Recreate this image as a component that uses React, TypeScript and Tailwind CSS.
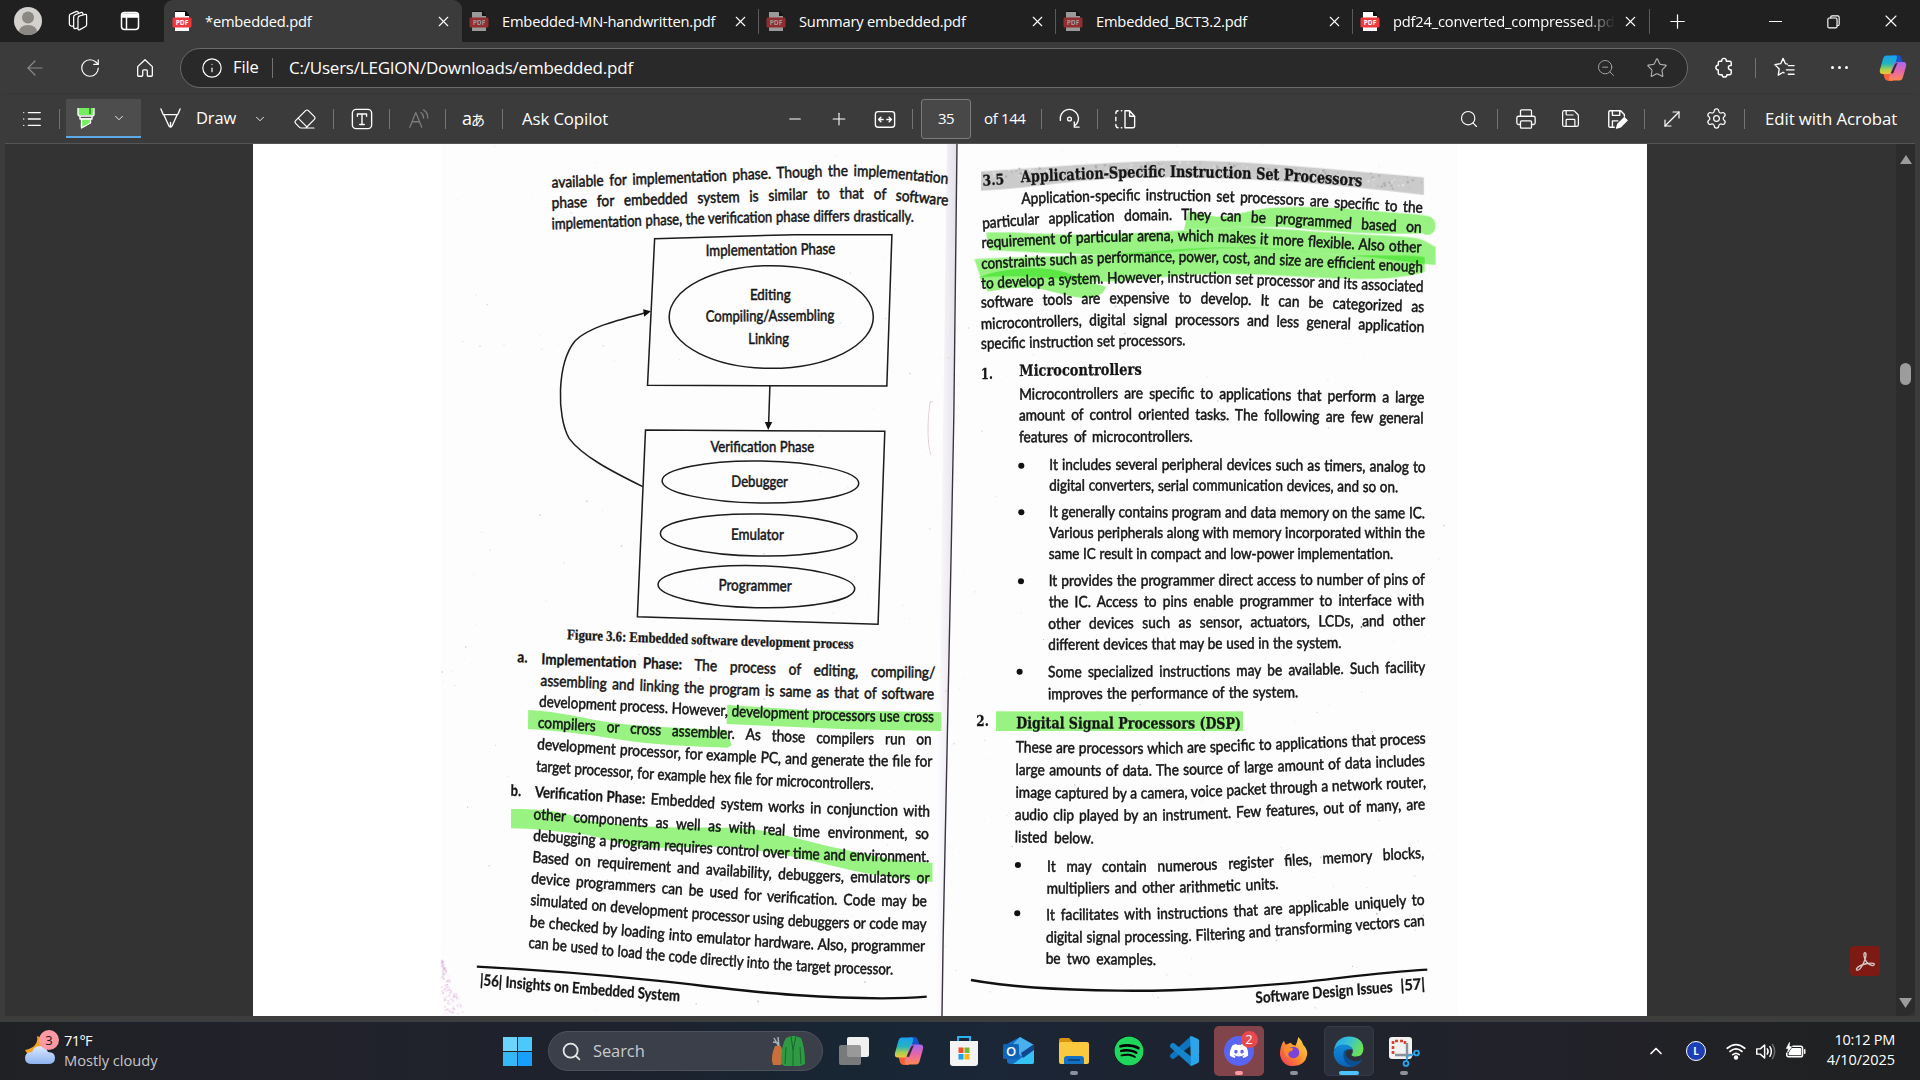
import React from "react";
import {
  ArrowLeft, ChevronDown, ChevronUp, Eraser, Info, List, Minus, MoveDiagonal, Plus, Printer,
  RotateCw, Save, Search, Settings, Star, X, ZoomOut,
} from "lucide-react";
import { FaDiscord, FaSpotify } from "react-icons/fa";

/* ---------------------------------------------------------------- text set on a curve */

type Pt = [number, number];
const SANS = "Lato, 'Open Sans', sans-serif";
const SERIF = "'DejaVu Serif', 'Liberation Serif', serif";
const TIMES = "'Liberation Serif', serif";

let ctx: CanvasRenderingContext2D | null = null;
function measure(text: string, font: string) {
  if (!ctx) ctx = document.createElement("canvas").getContext("2d");
  if (!ctx) return text.length * 24;
  ctx.font = font;
  return ctx.measureText(text).width;
}

function curve(p: Pt[], k: number) {
  const q = p.map(([x, y]) => [x / k, y] as Pt);
  let d = `M${q[0][0]},${q[0][1]}`;
  for (let i = 0; i < q.length - 1; i++) {
    const a = q[i - 1] || q[i], b = q[i], c = q[i + 1], e = q[i + 2] || q[i + 1];
    d += `C${b[0] + (c[0] - a[0]) / 6},${b[1] + (c[1] - a[1]) / 6} ${c[0] - (e[0] - b[0]) / 6},${c[1] - (e[1] - b[1]) / 6} ${c[0]},${c[1]}`;
  }
  const n = q.length;
  const dx = q[n - 1][0] - q[n - 2][0], dy = q[n - 1][1] - q[n - 2][1];
  return d + `L${q[n - 1][0] + dx * 0.3},${q[n - 1][1] + dy * 0.3}`;
}

type LineProps = { t: string; p: Pt[]; size?: number; weight?: number; family?: string; fit?: boolean };
function Line({ t, p, size = 47, weight = 400, family = SANS, fit = false }: LineProps) {
  const id = React.useId();
  const width = p.slice(1).reduce((s, b, i) => s + (b[0] - p[i][0]), 0) + 3;
  const natural = measure(t, `${weight} ${size}px ${family}`);
  const spaces = t.split(" ").length - 1;
  let k = 0.865;
  if (fit || spaces === 0) k = width / natural;
  else {
    // keep word gaps from closing up on dense lines
    const tight = width / (natural + spaces);
    if (k > tight) k = tight;
  }
  const ws = spaces ? (width / k - natural) / spaces : 0;
  return (
    <text
      transform={`scale(${k} 1)`}
      style={{ fontFamily: family, fontSize: size, fontWeight: weight, wordSpacing: ws }}
      fill="#151515" stroke="#151515" strokeWidth={weight > 500 ? 0.9 : 1.6}
    >
      <path id={id} d={curve(p, k)} fill="none" stroke="none" />
      <textPath href={`#${id}`}>{t}</textPath>
    </text>
  );
}

const Zone = ({ x, y, children }: { x: number; y: number; children: React.ReactNode }) => (
  <g transform={`translate(${x} ${y}) scale(0.338 0.33333)`}>{children}</g>
);

const topLeft: LineProps[] = [
  { t: "available for implementation phase. Though the implementation", p: [[331, 143], [700, 129], [1000, 115], [1250, 109], [1503, 132]] },
  { t: "phase for embedded system is similar to that of software", p: [[331, 205], [560, 196], [860, 187], [1240, 176], [1503, 197]] },
  { t: "implementation phase, the verification phase differs drastically.", p: [[331, 268], [700, 254], [1070, 245], [1400, 245]] },
  { t: "Implementation Phase", fit: true, p: [[786, 348], [1166, 342]] },
  { t: "Editing", fit: true, p: [[917, 480], [1034, 480]] },
  { t: "Compiling/Assembling", fit: true, p: [[786, 545], [1163, 542]] },
  { t: "Linking", fit: true, p: [[912, 611], [1029, 611]] },
  { t: "Verification Phase", fit: true, p: [[800, 935], [1104, 935]] },
  { t: "Debugger", fit: true, p: [[862, 1040], [1026, 1041]] },
  { t: "Emulator", fit: true, p: [[861, 1199], [1014, 1200]] },
  { t: "Programmer", fit: true, p: [[824, 1351], [1037, 1354]] },
];

const bottomLeft: LineProps[] = [
  { t: "Figure 3.6: Embedded software development process", fit: true, family: TIMES, weight: 700, size: 44, p: [[376, 88], [800, 104], [1220, 116]] },
  { t: "a.", p: [[229, 157], [256, 158]], weight: 700 },
  { t: "Implementation Phase:", p: [[300, 163], [713, 179]], weight: 700, size: 46 },
  { t: "The process of editing, compiling/", p: [[752, 181], [1100, 196], [1463, 204]] },
  { t: "assembling and linking the program is same as that of software", p: [[297, 227], [700, 247], [1100, 262], [1460, 268]] },
  { t: "development process. However, development processors use cross", p: [[293, 290], [600, 306], [840, 318], [1200, 332], [1458, 336]] },
  { t: "compilers or cross assembler. As those compilers run on", p: [[289, 353], [600, 373], [850, 386], [1150, 400], [1455, 404]] },
  { t: "development processor, for example PC, and generate the file for", p: [[287, 418], [700, 445], [1100, 464], [1455, 470]] },
  { t: "target processor, for example hex file for microcontrollers.", p: [[284, 484], [700, 512], [1100, 532], [1282, 539]] },
  { t: "b.", p: [[209, 557], [237, 558]], weight: 700 },
  { t: "Verification Phase:", p: [[280, 562], [604, 582]], weight: 700, size: 46 },
  { t: "Embedded system works in conjunction with", p: [[623, 583], [1000, 606], [1449, 620]] },
  { t: "other components as well as with real time environment, so", p: [[276, 628], [700, 657], [1100, 681], [1447, 687]] },
  { t: "debugging a program requires control over time and environment.", p: [[275, 692], [700, 724], [1100, 748], [1446, 756]] },
  { t: "Based on requirement and availability, debuggers, emulators or", p: [[273, 757], [700, 788], [1100, 812], [1446, 820]] },
  { t: "device programmers can be used for verification. Code may be", p: [[269, 820], [700, 853], [1100, 882], [1442, 889]] },
  { t: "simulated on development processor using debuggers or code may", p: [[267, 885], [700, 922], [1100, 951], [1440, 958]] },
  { t: "be checked by loading into emulator hardware. Also, programmer", p: [[265, 950], [700, 991], [1100, 1018], [1437, 1024]] },
  { t: "can be used to load the code directly into the target processor.", p: [[261, 1013], [700, 1056], [1100, 1085], [1341, 1094]] },
  { t: "|56| Insights on Embedded System", fit: true, weight: 700, p: [[118, 1126], [400, 1150], [707, 1174]] },
];

const section35: LineProps[] = [
  { t: "3.5", fit: true, family: SERIF, weight: 700, size: 44, p: [[97, 137], [158, 133]] },
  { t: "Application-Specific Instruction Set Processors", fit: true, family: SERIF, weight: 700, size: 48, p: [[210, 127], [430, 117], [650, 111], [950, 119], [1216, 139]] },
  { t: "Application-specific instruction set processors are specific to the", p: [[212, 192], [560, 181], [850, 187], [1100, 200], [1396, 219]] },
  { t: "particular application domain. They can be programmed based on", p: [[96, 266], [300, 251], [680, 240], [950, 250], [1200, 267], [1396, 278]] },
  { t: "requirement of particular arena, which makes it more flexible. Also other", p: [[94, 324], [400, 308], [700, 303], [950, 314], [1200, 328], [1396, 338]] },
  { t: "constraints such as performance, power, cost, and size are efficient enough", p: [[93, 387], [400, 371], [700, 366], [1000, 376], [1396, 397]] },
  { t: "to develop a system. However, instruction set processor and its associated", p: [[93, 446], [400, 432], [700, 428], [1000, 439], [1398, 456]] },
  { t: "software tools are expensive to develop. It can be categorized as", p: [[92, 503], [400, 492], [700, 490], [1000, 500], [1400, 517]] },
  { t: "microcontrollers, digital signal processors and less general application", p: [[92, 568], [400, 557], [700, 555], [1000, 561], [1400, 577]] },
  { t: "specific instruction set processors.", p: [[92, 627], [400, 620], [694, 616]] },
  { t: "1.", fit: true, family: SERIF, weight: 700, size: 42, p: [[92, 717], [124, 717]] },
  { t: "Microcontrollers", fit: true, family: SERIF, weight: 700, size: 47, p: [[205, 708], [564, 704]] },
  { t: "Microcontrollers are specific to applications that perform a large", p: [[205, 779], [700, 776], [1400, 789]] },
  { t: "amount of control oriented tasks. The following are few general", p: [[204, 842], [700, 839], [1400, 851]] },
  { t: "features of microcontrollers.", p: [[204, 907], [716, 905]] },
];

const micro: LineProps[] = [
  { t: "It includes several peripheral devices such as timers, analog to", p: [[294, 90], [850, 90], [1404, 97]] },
  { t: "digital converters, serial communication devices, and so on.", p: [[294, 152], [850, 152], [1322, 157]] },
  { t: "It generally contains program and data memory on the same IC.", p: [[294, 231], [1403, 235]] },
  { t: "Various peripherals along with memory incorporated within the", p: [[294, 295], [1404, 295]] },
  { t: "same IC result in compact and low-power implementation.", p: [[292, 358], [1309, 358]] },
  { t: "It provides the programmer direct access to number of pins of", p: [[292, 438], [1404, 434]] },
  { t: "the IC. Access to pins enable programmer to interface with", p: [[292, 502], [1403, 496]] },
  { t: "other devices such as sensor, actuators, LCDs, and other", p: [[291, 567], [1404, 557]] },
  { t: "different devices that may be used in the system.", p: [[291, 630], [1156, 624]] },
  { t: "Some specialized instructions may be available. Such facility", p: [[290, 712], [850, 708], [1404, 697]] },
  { t: "improves the performance of the system.", p: [[290, 778], [1028, 772]] },
  { t: "2.", fit: true, family: SERIF, weight: 700, size: 42, p: [[78, 858], [112, 858]] },
  { t: "Digital Signal Processors (DSP)", fit: true, family: SERIF, weight: 700, size: 47, p: [[196, 865], [858, 866]] },
];

const dsp: LineProps[] = [
  { t: "These are processors which are specific to applications that process", p: [[195, 157], [600, 161], [950, 149], [1406, 131]] },
  { t: "large amounts of data. The source of large amount of data includes", p: [[194, 225], [600, 227], [950, 215], [1406, 197]] },
  { t: "image captured by a camera, voice packet through a network router,", p: [[194, 293], [600, 295], [950, 281], [1407, 262]] },
  { t: "audio clip played by an instrument. Few features, out of many, are", p: [[192, 360], [600, 362], [950, 348], [1406, 328]] },
  { t: "listed below.", p: [[192, 427], [422, 431]] },
  { t: "It may contain numerous register files, memory blocks,", p: [[287, 515], [650, 514], [950, 500], [1404, 474]] },
  { t: "multipliers and other arithmetic units.", p: [[286, 581], [700, 577], [970, 567]] },
  { t: "It facilitates with instructions that are applicable uniquely to", p: [[285, 661], [700, 655], [1050, 638], [1404, 614]] },
  { t: "digital signal processing. Filtering and transforming vectors can", p: [[284, 728], [700, 723], [1050, 702], [1404, 677]] },
  { t: "be two examples.", p: [[283, 791], [606, 795]] },
  { t: "Software Design Issues", fit: true, weight: 700, p: [[905, 910], [1308, 876]] },
  { t: "|57|", fit: true, weight: 700, p: [[1334, 873], [1403, 868]] },
];

const random = (() => {
  let s = 7;
  return () => ((s = (s * 16807) % 2147483647) / 2147483647);
})();
const speckles = Array.from({ length: 420 }, () => ({ x: 442 + random() * 1014, y: 145 + random() * 869, r: 0.3 + random() * 0.6, o: 0.06 + random() * random() * 0.4, c: "#555" }));
const purple = Array.from({ length: 110 }, () => {
  const v = random();
  return { x: 442 + random() * 24 * v, y: 960 + v * 54, r: 0.5 + random() * 0.9, o: 0.35, c: "#dcaedb" };
});
const grain = Array.from({ length: 220 }, () => ({ x: 96 + random() * 1300, v: random(), r: 1.5 + random() * 2.5, light: random() > 0.5 }));

const G = "#98f383";

function ScannedSpread() {
  return (
    <svg className="block" width="1394" height="872" viewBox="253 144 1394 872">
      <defs>
        <linearGradient id="gutter" x1="0" x2="1">
          <stop offset="0" stopColor="#e9e6f0" stopOpacity="0" />
          <stop offset="1" stopColor="#e2dfe9" />
        </linearGradient>
      </defs>
      <rect x="441" y="144" width="1017" height="872" fill="#fefdfe" />
      <path d="M947 144H957L943 1016H935Z" fill="url(#gutter)" />
      {[...speckles, ...purple].map((d, i) => <circle key={i} cx={d.x} cy={d.y} r={d.r} opacity={d.o} fill={d.c} />)}
      <path d="M957 144C956 300 954 420 951 560S944 860 942 1016" fill="none" stroke="#3b3340" strokeWidth="1.4" />

      <g style={{ isolation: "isolate" }}>
        <Zone x={440} y={610}>
          <g fill={G} style={{ mixBlendMode: "multiply" }}>
            <path d="M850 285L1080 300L1483 307V363L1200 358L848 342Z" />
            <path d="M261 300C350 302 440 330 520 340S760 357 848 360L863 406L850 413C700 408 620 402 540 390S400 366 260 357Z" />
            <path d="M210 597C280 597 350 602 400 620S500 640 600 648S800 650 900 655C1000 665 1100 700 1200 720S1350 755 1457 758V816C1350 808 1250 790 1180 772S1000 728 900 716S700 716 620 713S480 678 400 670S280 656 210 655Z" />
          </g>
        </Zone>
        <Zone x={950} y={140}>
          <path d="M92 94C300 82 500 62 700 62S1200 95 1402 112V165C1200 140 1000 118 700 112S300 140 92 152Z" fill="#cbcbcb" />
          {grain.map((g, i) => {
            const u = (g.x - 700) / 700;
            const top = 66 + (u < 0 ? 30 : 48) * Math.min(1, Math.abs(u) ** 1.3);
            return <circle key={i} cx={g.x} cy={top + g.v * 42} r={g.r} fill={g.light ? "#e6e6e6" : "#aaaaaa"} />;
          })}
          <g fill={G} style={{ mixBlendMode: "multiply" }}>
            <path d="M704 214L790 230C850 228 880 208 960 203S1150 203 1200 208S1380 222 1405 226C1430 228 1438 245 1436 262C1432 285 1410 290 1400 280C1280 284 1150 276 1060 268S980 262 840 262L692 270Z" />
          </g>
          <g fill={G} style={{ mixBlendMode: "multiply" }}>
            <path d="M107 278C200 274 300 286 420 284S660 272 850 262C950 262 1080 276 1200 282S1380 290 1400 300S1430 318 1437 320V375C1350 368 1280 352 1180 346S1000 326 880 324S700 336 560 342S260 336 115 330Z" />
          </g>
          <g fill={G} style={{ mixBlendMode: "multiply" }}>
            <path d="M72 357C200 350 320 350 450 344S700 322 860 322S1080 345 1200 346S1380 345 1405 352V395C1360 414 1260 420 1160 416S960 404 840 402S640 412 540 420S440 426 400 424S240 402 90 412Z" />
          </g>
          <g fill={G} style={{ mixBlendMode: "multiply" }}>
            <path d="M86 411C150 386 240 380 300 388S420 434 462 440Q450 474 400 475C330 468 290 446 240 444S160 446 112 455Z" />
          </g>
        </Zone>
        <Zone x={950} y={440}><rect x="136" y="814" width="731" height="59" fill={G} /></Zone>
      </g>

      <Zone x={440} y={140}>
        <g fill="none" stroke="#1c1c1c" strokeWidth="4.5">
          <path d="M635 296L1050 284L1337 284L1322 738L614 736Z" />
          <ellipse cx="980" cy="531" rx="302" ry="154" />
          <path d="M608 870L1316 874L1296 1453L584 1430Z" />
          <ellipse cx="948" cy="1026" rx="291" ry="63" transform="rotate(0.8 948 1026)" />
          <ellipse cx="943" cy="1185" rx="291" ry="63" transform="rotate(1 943 1185)" />
          <ellipse cx="936" cy="1340" rx="291" ry="63" transform="rotate(1.3 936 1340)" />
          <path d="M976 738L972 860" />
          <path d="M600 1040C510 995 420 948 382 895C345 830 345 670 400 602C440 562 520 542 605 519" />
        </g>
        <path d="M961 846H983L971 870ZM601 508L624 514L604 530Z" fill="#111" />
        <path d="M1458 785H1450Q1440 860 1446 915L1452 945" fill="none" stroke="#e3d3d7" strokeWidth="3" />
        {topLeft.map((l) => <Line key={l.t} {...l} />)}
      </Zone>
      <Zone x={440} y={610}>
        {bottomLeft.map((l) => <Line key={l.t} {...l} />)}
        <path d="M109 1070C300 1080 480 1095 640 1112S900 1145 1050 1155S1350 1168 1440 1160" fill="none" stroke="#111" strokeWidth="7" />
      </Zone>
      <Zone x={950} y={140}>{section35.map((l) => <Line key={l.t} {...l} />)}</Zone>
      <Zone x={950} y={440}>
        {[[211, 77], [211, 217], [210, 424], [206, 695]].map(([x, y]) => <circle key={y} cx={x} cy={y} r="9" fill="#111" />)}
        {micro.map((l) => <Line key={l.t} {...l} />)}
        <circle cx="1217" cy="561" r="2.500" fill="#333" />
      </Zone>
      <Zone x={950} y={700}>
        {[[201, 495], [199, 640]].map(([x, y]) => <circle key={y} cx={x} cy={y} r="9" fill="#111" />)}
        {dsp.map((l) => <Line key={l.t} {...l} />)}
        <path d="M62 840C180 862 340 870 500 872S860 862 1000 850S1250 818 1412 809" fill="none" stroke="#111" strokeWidth="7" />
      </Zone>
    </svg>
  );
}

/* ---------------------------------------------------------------- icons */

function Svg({ s = 22, children, w = 1.3, vb = "0 0 24 24" }: { s?: number; children: React.ReactNode; w?: number; vb?: string }) {
  return <svg className="block shrink-0" width={s} height={s} viewBox={vb} fill="none" stroke="currentColor" strokeWidth={w} strokeLinecap="round" strokeLinejoin="round">{children}</svg>;
}

function PdfIcon({ dim }: { dim?: boolean }) {
  return (
    <svg className={dim ? "block shrink-0 opacity-55" : "block shrink-0"} width="20" height="20" viewBox="0 0 20 20">
      <path d="M3 0H13L17 5V8H3Z" fill="#fff" />
      <path d="M3 0H14L17 4V5H13V1H3Z" fill="#0a0a0a" />
      <rect x="3" y="14" width="14" height="6" fill="#fff" />
      <rect x="0.5" y="6.5" width="19" height="10" rx="1.2" fill="#f0393e" />
      <text x="10" y="14" textAnchor="middle" fontSize="6.6" fontWeight="700" fontFamily="Open Sans" fill="#fff">PDF</text>
    </svg>
  );
}

function Copilot({ s }: { s: number }) {
  return (
    <svg className="block shrink-0" width={s} height={s} viewBox="0 0 30 30">
      <defs>
        <linearGradient id="cpA" x1="0" y1="0" x2="0" y2="1">
          <stop offset="0" stopColor="#1a9ff0" /><stop offset=".45" stopColor="#22b4c0" /><stop offset=".75" stopColor="#a5cf50" /><stop offset="1" stopColor="#f3c43a" />
        </linearGradient>
        <linearGradient id="cpB" x1="0" y1="0" x2="0" y2="1">
          <stop offset="0" stopColor="#a468f0" /><stop offset=".5" stopColor="#e866a8" /><stop offset="1" stopColor="#ff8a50" />
        </linearGradient>
      </defs>
      <path d="M15 1H20Q23 1 24 4L25.500 9H21Q18 9 17 12Z" fill="#1b50c8" />
      <path d="M15 29H10Q7 29 6 26L4.500 21H9Q12 21 13 18Z" fill="#f4613a" />
      <path d="M8 1.500H17.500Q20 1.500 19 5L14.500 19Q13.700 21.500 11 21.500H4Q0 21.500 1 17L4.500 4.500Q5.400 1.500 8 1.500Z" fill="url(#cpA)" />
      <path d="M22 28.500H12.500Q10 28.500 11 25L15.500 11Q16.300 8.500 19 8.500H26Q30 8.500 29 13L25.500 25.500Q24.600 28.500 22 28.500Z" fill="url(#cpB)" />
      <path d="M17.200 10.500L20 9L15 21L12.600 20.500Z" fill="#2b2b38" />
    </svg>
  );
}

const Sep = ({ className = "" }: { className?: string }) => <div className={"h-5 w-px shrink-0 bg-[#737373] " + className} />;

/* ---------------------------------------------------------------- browser chrome */

function Tab({ title, dim, active, clip }: { title: string; dim?: boolean; active?: boolean; clip?: boolean }) {
  return (
    <div className={active
      ? "flex h-[43px] w-[298px] shrink-0 items-center rounded-t-[9px] bg-[#3b3b3b] pb-px pl-[8px]"
      : "flex h-[42px] w-[297px] shrink-0 items-center pl-[7px]"}>
      <PdfIcon dim={dim} />
      <div className={clip
        ? "ml-[13px] w-[222px] overflow-hidden whitespace-nowrap text-[14.7px] tracking-[-0.2px] [mask-image:linear-gradient(to_right,black_86%,transparent)]"
        : "ml-[13px] w-[222px] overflow-hidden whitespace-nowrap text-[14.7px] tracking-[-0.2px]"}>{title}</div>
      <X size={17} strokeWidth={1.6} className={clip ? "ml-[7px]" : "ml-[8px]"} />
      {!active && <div className="ml-auto h-[25px] w-px bg-[#5a5a5a]" />}
    </div>
  );
}

function TabStrip() {
  return (
    <div className="flex h-[42px] items-start bg-[#202020]">
      <div className="flex h-[42px] w-[164px] shrink-0 items-center">
        <svg className="ml-[14px] block" width="28" height="28" viewBox="0 0 28 28">
          <circle cx="14" cy="14" r="14" fill="#d3d1ce" />
          <circle cx="14" cy="10.500" r="6" fill="#8b8884" />
          <path d="M5 24.500Q6 18 14 18T23 24.500Q19 28 14 28T5 24.500Z" fill="#8b8884" />
        </svg>
        <div className="ml-[24px]">
          <Svg s={23}>
            <path d="M13 6.500L20 4.500Q21.500 4.200 21.500 6V15.500Q21.500 17 20 17.500L14.500 20.500Q12.500 21.500 12.500 19.500V8.500Q12.500 7 14 6.500" />
            <path d="M12 19L9.500 19.500Q8 19.500 8 18V7Q8 5.500 9.500 5L16 2.500Q17.500 2.200 17.700 4.500M7.500 17L5 16.500Q3.500 16 3.500 14.500V6Q3.500 4.500 5 4L11 1.500Q12.500 1.200 13 3" />
          </Svg>
        </div>
        <svg className="ml-[31px] block" width="20" height="20" viewBox="0 0 20 20" fill="none" stroke="#fff" strokeWidth="1.500">
          <rect x="1.500" y="1.500" width="17" height="17" rx="3" /><path d="M6.500 6V18" /><path d="M2 3H18V6H2Z" fill="#fff" />
        </svg>
      </div>
      <Tab title="*embedded.pdf" active />
      <Tab title="Embedded-MN-handwritten.pdf" dim />
      <Tab title="Summary embedded.pdf" dim />
      <Tab title="Embedded_BCT3.2.pdf" dim />
      <Tab title="pdf24_converted_compressed.pdf" clip />
      <div className="flex h-[42px] flex-1 items-center">
        <Plus size={23} strokeWidth={1.300} className="ml-[16px]" />
        <div className="ml-[80px] h-px w-[13px] bg-white" />
        <div className="ml-[43px]">
          <Svg s={17} w={1.600}><rect x="4" y="7" width="13" height="14" rx="2" /><path d="M8 7V6Q8 4 10 4H18Q20 4 20 6V16Q20 18 18 18H17" /></Svg>
        </div>
        <X size={20} strokeWidth={1.300} className="ml-[39px]" />
      </div>
    </div>
  );
}

function AddressRow() {
  return (
    <div className="flex h-[51px] items-center">
      <ArrowLeft size={24} strokeWidth={1.200} className="ml-[23px] text-[#8a8a8a]" />
      <RotateCw size={22} strokeWidth={1.300} className="ml-[32px]" />
      <div className="ml-[33px]">
        <Svg s={22} w={1.400}><path d="M4 10.500L12 3L20 10.500V20Q20 21 19 21H15.500Q14.500 21 14.500 20V15Q14.500 14 13.500 14H10.500Q9.500 14 9.500 15V20Q9.500 21 8.500 21H5Q4 21 4 20Z" /></Svg>
      </div>
      <div className="ml-[24px] flex h-10 w-[1508px] shrink-0 items-center rounded-full border border-[#6a6a6a] bg-[#292929]">
        <Info size={22} strokeWidth={1.300} className="ml-[20px]" />
        <div className="ml-[10px] w-[30px] text-[16.500px] tracking-[-0.1px]">File</div>
        <Sep className="ml-[9px]" />
        <div className="ml-[16px] w-[1300px] whitespace-nowrap text-[17px] tracking-[-0.220px]">C:/Users/LEGION/Downloads/embedded.pdf</div>
        <ZoomOut size={20} strokeWidth={1.200} className="ml-[7px] text-[#a0a0a0]" />
        <Star size={22} strokeWidth={1.200} className="ml-[30px] text-[#b5b5b5]" />
      </div>
      <div className="ml-[25px]">
        <Svg s={23} w={1.500}><path d="M9 5.500Q9 2.500 11.500 2.500T14 5.500H17.500Q19 5.500 19 7V10Q16 9.500 16 12T19 14.500V18Q19 19.500 17.500 19.500H14.500Q14.500 22 12 22T9.500 19.500H7Q5.500 19.500 5.500 18V14.500Q3 14.500 3 12T5.500 9.500V7Q5.500 5.500 7 5.500Z" /></Svg>
      </div>
      <Sep className="ml-[19px]" />
      <div className="ml-[17px]">
        <Svg s={23} w={1.400}><path d="M15 8.500L13 8L10.500 2.500L8 8L2 9L6.500 13.500L5.500 20L10.500 17L11.500 17.600M16 10H22M14 14.500H22M16 19H22" /></Svg>
      </div>
      <div className="ml-[35px] flex gap-[4px]">
        <i className="size-[3px] rounded-full bg-white" /><i className="size-[3px] rounded-full bg-white" /><i className="size-[3px] rounded-full bg-white" />
      </div>
      <div className="ml-[31px]"><Copilot s={28} /></div>
    </div>
  );
}

function PdfToolbar() {
  return (
    <div className="flex h-[50px] shrink-0 items-center rounded-t-[9px] border-t border-[#363636] pl-[21px]">
      <List size={22} strokeWidth={1.400} />
      <Sep className="ml-[16px]" />
      <div className="ml-[6px] flex h-[39px] w-[75px] shrink-0 items-center border-b-2 border-[#5eaae8] bg-[#4d4d4d]">
        <svg className="ml-[9px] block" width="22" height="22" viewBox="0 0 22 22" fill="none" stroke="#fff" strokeWidth="1.400" strokeLinejoin="round">
          <path d="M3 1H19V8H3Z" fill="#72ef5d" stroke="none" /><path d="M15 1V7" stroke="#2c6b22" />
          <path d="M3 1V7Q3 9 5 9H17Q19 9 19 7V1M5 9V12H17V9" /><path d="M6.500 12V21L15.500 16V12Z" fill="#72ef5d" />
        </svg>
        <ChevronDown size={14} strokeWidth={1.500} className="ml-[15px]" />
      </div>
      <div className="ml-[18px]"><Svg s={23} w={1.400}><path d="M2 2L4.500 8H19.500L22 2M5 8L10.500 20Q12 22 13.500 20L19 8M12 16V21" /></Svg></div>
      <div className="ml-[14px] w-[40px] text-[16.500px] tracking-[-0.1px]">Draw</div>
      <ChevronDown size={14} strokeWidth={1.500} className="ml-[17px]" />
      <Eraser size={24} strokeWidth={1.200} className="ml-[26px]" />
      <Sep className="ml-[16px]" />
      <div className="ml-[17px]">
        <Svg s={22} w={1.500}><rect x="1.500" y="1.500" width="21" height="21" rx="4" /><path d="M7 9V6.500H17V9M12 6.500V18M9.500 18H14.500" /></Svg>
      </div>
      <Sep className="ml-[16px]" />
      <div className="ml-[18px] text-[#7c7c7c]">
        <Svg s={22} w={1.400}><path d="M2 21L8.500 5L15 21M4.500 15H12.500M14 5Q17 7 17 11M17 2Q22 5 21.500 11" /></Svg>
      </div>
      <Sep className="ml-[15px]" />
      <div className="ml-[16px] flex w-[26px] items-baseline text-[18px] tracking-[-1px]">a<span className="font-['Noto_Sans_CJK_JP'] text-[14px]">あ</span></div>
      <Sep className="ml-[14px]" />
      <div className="ml-[19px] w-[100px] whitespace-nowrap text-[16.800px] tracking-[-0.1px]">Ask Copilot</div>
      <Minus size={18} strokeWidth={1.600} className="ml-[164px]" />
      <Plus size={20} strokeWidth={1.300} className="ml-[25px]" />
      <div className="ml-[25px]">
        <Svg s={22} w={1.500}><rect x="1.500" y="4" width="21" height="17" rx="3" /><path d="M5 12.500H10M14 12.500H19M7.500 10L5 12.500L7.500 15M16.500 10L19 12.500L16.500 15" /></Svg>
      </div>
      <Sep className="ml-[16px]" />
      <div className="ml-[8px] flex h-[40px] w-[50px] shrink-0 items-center justify-center rounded-[3px] border border-[#7b7b7b] bg-[#484848] text-[15px] tracking-[-0.500px]">35</div>
      <div className="ml-[13px] w-[44px] whitespace-nowrap text-[15px] tracking-[-0.350px]">of 144</div>
      <Sep className="ml-[13px]" />
      <div className="ml-[16px]">
        <Svg s={23} w={1.400}><path d="M2.500 14A9.500 9.500 0 1 1 17 20M17 15.500V21H22" /><circle cx="12" cy="12.500" r="2" /></Svg>
      </div>
      <Sep className="ml-[16px]" />
      <div className="ml-[16px]">
        <Svg s={22} w={1.500}><path d="M12 3H17L22.500 9V20Q22.500 21.500 21 21.500H12ZM17 3V9H22.500M8.500 3H8M4.500 3Q2 3 2 6M2 10V14M2 18Q2 21.500 4.500 21.500M8.500 21.500H8" /></Svg>
      </div>
      <Search size={20} strokeWidth={1.400} className="ml-[323px]" />
      <Sep className="ml-[18px]" />
      <Printer size={22} strokeWidth={1.400} className="ml-[17px]" />
      <Save size={21} strokeWidth={1.400} className="ml-[23px]" />
      <div className="ml-[25px]">
        <Svg s={22} w={1.500}><path d="M9 21H4.500Q3 21 3 19.500V4.500Q3 3 4.500 3H16L20 7V9M7 3V8H15V3M7 21V14H13" /><path d="M11.500 22L13 17.500L20 10.500L23 13.500L16 20.500Z" fill="currentColor" /></Svg>
      </div>
      <Sep className="ml-[16px]" />
      <MoveDiagonal size={24} strokeWidth={1.200} className="ml-[15px]" />
      <Settings size={23} strokeWidth={1.300} className="ml-[21px]" />
      <Sep className="ml-[16px]" />
      <div className="ml-[20px] whitespace-nowrap text-[16.800px] tracking-[-0.060px]">Edit with Acrobat</div>
    </div>
  );
}

function Viewer() {
  return (
    <div className="mx-[5px] flex h-[873px] border-t border-[#555] bg-[#333]">
      <div className="w-[248px] shrink-0" />
      <div className="w-[1394px] shrink-0 bg-white"><ScannedSpread /></div>
      <div className="flex w-[249px] shrink-0 items-end justify-end pr-[16px] pb-[40px]">
        <div className="flex size-[30px] items-center justify-center rounded-[4px] bg-[#7e1a14] text-[#d8c9c8]">
          <Svg s={22} w={1.500}><path d="M11.500 3Q10 4.500 12 10Q14 15 20 17Q22.500 17 22 15Q20 13.500 13 15Q5 17 3 20Q2 22 4 22Q6.500 22 10 15Q13.500 8 13 4Q12.500 2.500 11.500 3Z" /></Svg>
        </div>
      </div>
      <div className="flex flex-1 flex-col items-center rounded-br-[9px] bg-[#2c2c2c]">
        <svg className="mt-[11px] block" width="12" height="10"><path d="M6 0L12 9H0Z" fill="#9c9c9c" /></svg>
        <div className="mt-[198px] h-[22px] w-[11px] rounded-full bg-[#9c9c9c]" />
        <svg className="mt-auto mb-[8px] block" width="13" height="10"><path d="M0 0H13L6.500 10Z" fill="#9c9c9c" /></svg>
      </div>
    </div>
  );
}

/* ---------------------------------------------------------------- taskbar */

function Slot({ children, mark, tile }: { children: React.ReactNode; mark?: "dot" | "red" | "blue"; tile?: "red" | "grey" }) {
  return (
    <div className="flex h-full w-[55px] shrink-0 items-center justify-center">
      <div className={
        tile === "red" ? "relative flex h-[50px] w-[50px] items-center justify-center rounded-[5px] bg-[#82444b]"
          : tile === "grey" ? "relative flex h-[50px] w-[50px] items-center justify-center rounded-[5px] border border-[#363c47] bg-[#2b303b]"
            : "relative flex h-[50px] w-[50px] items-center justify-center"}>
        {children}
        {mark === "dot" && <i className="absolute bottom-[1px] h-[4px] w-[8px] rounded-full bg-[#8d919b]" />}
        {mark === "red" && <i className="absolute bottom-[1px] h-[4px] w-[8px] rounded-full bg-[#ff99a4]" />}
        {mark === "blue" && <i className="absolute bottom-0 h-[4px] w-[20px] rounded-full bg-[#4cc2ff]" />}
      </div>
    </div>
  );
}

function Taskbar() {
  return (
    <div className="flex h-[59px] items-center border-t border-[#3a3d42] bg-[linear-gradient(90deg,#1f2124_0%,#22222b_15%,#1e222d_30%,#182634_45%,#1b2636_52%,#1e222e_65%,#22222a_80%,#202122_95%)]">
      <div className="flex w-[503px] shrink-0 items-center pl-[24px]">
        <svg className="block" width="36" height="42" viewBox="0 0 36 42">
          <defs>
            <linearGradient id="cloud" x1="0" y1="0" x2="0" y2="1"><stop offset="0" stopColor="#dce9ff" /><stop offset="1" stopColor="#8fb3f0" /></linearGradient>
          </defs>
          <path d="M13 6Q15 17 1 20Q5 28 14 25Q22 20 18 8Z" fill="#f2a324" />
          <path d="M8 34Q1 34 1 28T8 22Q10 16 16 16T24 22Q31 22 31 28T24 34Z" fill="url(#cloud)" />
          <circle cx="25" cy="10" r="10" fill="#ff99a4" />
          <text x="25" y="15" textAnchor="middle" fontSize="13" fontFamily="Open Sans" fill="#1a1a1a">3</text>
        </svg>
        <div className="mb-[3px] ml-[4px] text-[14.700px] leading-[20px] tracking-[-0.050px]"><div className="tracking-[-0.700px]">71°F</div><div className="text-[#c5c6c9]">Mostly cloudy</div></div>
      </div>
      <div className="grid size-[29px] shrink-0 grid-cols-2 gap-px">
        <i className="bg-[#6cd3fb]" /><i className="bg-[#4cc9fa]" /><i className="bg-[#35b8f8]" /><i className="bg-[#179ffb]" />
      </div>
      <div className="ml-[16px] flex h-[40px] w-[275px] shrink-0 items-center rounded-full border border-[#4d525c] bg-[#3a3f49]">
        <Search size={21} strokeWidth={2} className="ml-[12px] text-[#e6e6e6]" />
        <div className="ml-[11px] text-[16.500px] tracking-[-0.100px] text-[#c8cad0]">Search</div>
        <svg className="ml-auto mr-[16px] block" width="36" height="32" viewBox="0 0 36 32">
          <path d="M4 3L9 12M8 2L9 12M3 7L9 8" stroke="#aab0bb" strokeWidth="1.500" fill="none" />
          <path d="M5 11H11Q14 20 11 30H3Q0 22 5 11Z" fill="#c8703c" />
          <path d="M16 3L21 1H26L31 3Q35 12 35 29L30 31H15L11 29Q11 10 16 3Z" fill="#2f9a44" />
          <path d="M21 1L23 15L26 1M23 15V31M16 12L15 29M30 12L31 29" stroke="#17662a" strokeWidth="1" fill="none" />
        </svg>
      </div>
      <div className="ml-[3px] flex h-full">
        <Slot>
          <svg width="30" height="28" viewBox="0 0 30 28"><rect x="8" y="0" width="22" height="20" rx="2" fill="#f0f0f0" /><rect x="0" y="8" width="22" height="20" rx="2" fill="#8a8a8a" opacity=".85" /></svg>
        </Slot>
        <Slot><Copilot s={30} /></Slot>
        <Slot>
          <svg width="28" height="30" viewBox="0 0 28 30"><path d="M8 6V1H20V6" fill="none" stroke="#2cb3ee" strokeWidth="2" /><path d="M0 5H28V27Q28 30 25 30H3Q0 30 0 27Z" fill="#f4f4f4" /><path d="M8.500 11.500H13.500V17H8.500Z" fill="#f0502a" /><path d="M14.500 11.500H19.500V17H14.500Z" fill="#7cb82f" /><path d="M8.500 18H13.500V23.500H8.500Z" fill="#1ba1e8" /><path d="M14.500 18H19.500V23.500H14.500Z" fill="#fcb813" /></svg>
        </Slot>
        <Slot>
          <svg width="32" height="30" viewBox="0 0 32 30"><path d="M4 8L17 1L31 9V26Q31 28 29 28H8Q4 28 4 25Z" fill="#1a6fc4" /><path d="M17 1L31 9L18 20L8 10Z" fill="#48b0ee" /><path d="M31 9V26Q31 28 29 28H10L31 13Z" fill="#35c3f4" /><path d="M18 17L31 8V14L20 22Z" fill="#12458c" /><rect x="0" y="8" width="16" height="15" rx="1.500" fill="#0f64b8" /><text x="8" y="20" textAnchor="middle" fontSize="13" fontWeight="600" fontFamily="Open Sans" fill="#fff">O</text></svg>
        </Slot>
        <Slot mark="dot">
          <svg width="30" height="28" viewBox="0 0 30 28"><path d="M0 3Q0 1 2 1H10L14 5H28V12H0Z" fill="#d8930c" /><rect x="0" y="5" width="30" height="22" rx="2" fill="#fbc93d" /><path d="M5 27V22Q5 19 8 19H22Q25 19 25 22V27Z" fill="#1271c4" /><path d="M9 23H21" stroke="#0a3f7a" strokeWidth="1.500" /></svg>
        </Slot>
        <Slot><div className="rounded-full bg-black"><FaSpotify size={30} color="#1fd65f" /></div></Slot>
        <Slot>
          <svg width="30" height="30" viewBox="0 0 30 30"><path d="M22 0L1.500 18.500Q0 20 1.500 21.500L3 22.800Q4 23.500 5 22.800L22 9.500Z" fill="#0f74c0" /><path d="M22 30L1.500 11.500Q0 10 1.500 8.500L3 7.200Q4 6.500 5 7.200L22 20.500Z" fill="#1484cc" /><path d="M21 0.500Q22 0 23 0.300L29 3Q30 3.500 30 5V25Q30 26.500 29 27L23 29.700Q22 30 21 29.500L22 28Z" fill="#2ba4ea" /></svg>
        </Slot>
        <Slot tile="red" mark="red">
          <div className="flex size-[30px] items-center justify-center rounded-full bg-[#5865f2]"><FaDiscord size={20} color="#fff" /></div>
          <div className="absolute top-[5px] right-[6px] flex size-[17px] items-center justify-center rounded-full bg-[#e9484d] text-[13px] leading-none">2</div>
        </Slot>
        <Slot mark="dot">
          <svg width="29" height="29" viewBox="0 0 30 30">
            <defs><linearGradient id="fx" x1="1" y1="0" x2="0" y2="1"><stop offset="0" stopColor="#ffe14d" /><stop offset=".45" stopColor="#ff9a2c" /><stop offset="1" stopColor="#f0305c" /></linearGradient></defs>
            <path d="M20 0Q24 4 25 8Q30 13 29 19Q27 30 15 30T1 18Q1 10 5 4L7 8L12 6Q13 8 17 9Q19 5 20 0Z" fill="url(#fx)" /><circle cx="15" cy="16" r="6" fill="#7a44d8" /><path d="M5 12Q10 10 15 12Q14 15 11 15Q8 18 11 22Q5 20 5 12Z" fill="#ff8a2a" />
          </svg>
        </Slot>
        <Slot tile="grey" mark="blue">
          <svg width="31" height="31" viewBox="0 0 31 31">
            <defs>
              <linearGradient id="e1" x1="0" y1="0" x2="1" y2=".4"><stop offset="0" stopColor="#2a9fe4" /><stop offset=".5" stopColor="#35c1d8" /><stop offset="1" stopColor="#6ae05a" /></linearGradient>
              <linearGradient id="e2" x1="0" y1="0" x2="0" y2="1"><stop offset="0" stopColor="#128ad8" /><stop offset="1" stopColor="#0a63b8" /></linearGradient>
            </defs>
            <path d="M1 14Q3 1 16 0.500Q30 1 30.500 13Q30 20.500 23 20.500Q18.500 20.500 18.500 18.500Q20.500 16.500 19.500 13Q17 9 11 9Q4 9.500 1 14Z" fill="url(#e1)" />
            <path d="M0.500 15.500Q3 8.500 10.500 8.500Q17.500 9 19.800 13.500Q13 12 12 18Q12 25 20 26.500Q25 27 29 23Q25 31 16 31Q1 30 0.500 15.500Z" fill="url(#e2)" />
            <path d="M10.500 17Q9 26 18 30.500Q25 30 29 23.500Q25 26 20.500 25Q13 23 12.500 17Q13 14.500 15 13Q11 13.500 10.500 17Z" fill="#0c4f92" />
          </svg>
        </Slot>
        <Slot mark="dot">
          <svg width="32" height="31" viewBox="0 0 32 31"><rect x="1" y="1" width="23" height="22" rx="3" fill="#f2f2f2" /><path d="M5 18V5H17V9" fill="none" stroke="#d8452c" strokeWidth="2.600" strokeDasharray="3 2" /><path d="M19 7V22M7 19H25" stroke="#8a9099" strokeWidth="2.400" /><circle cx="28.500" cy="17" r="2.400" fill="none" stroke="#2aa4ea" strokeWidth="1.900" /><circle cx="18" cy="27.500" r="2.400" fill="none" stroke="#2aa4ea" strokeWidth="1.900" /><path d="M18.500 25L19.500 20L26 18" stroke="#2aa4ea" strokeWidth="1.600" fill="none" /></svg>
        </Slot>
      </div>
      <ChevronUp size={20} strokeWidth={2} className="ml-[215px]" />
      <div className="ml-[20px] flex size-[20px] items-center justify-center rounded-full border border-white bg-[#1d3fb5] text-[10px] font-bold">L</div>
      <div className="ml-[19px]">
        <Svg s={22} w={1.900}><path d="M2.500 9Q12 1 21.500 9M5.500 12.500Q12 7 18.500 12.500M8.500 16Q12 13 15.500 16" /><circle cx="12" cy="19" r="1.500" fill="currentColor" /></Svg>
      </div>
      <div className="ml-[8px]">
        <Svg s={21} w={1.700}><path d="M2 9V15H6L11 19.500V4.500L6 9ZM14 9Q16 12 14 15M17 6.500Q20.500 12 17 17.500" /><path d="M20 4Q25 12 20 20" stroke="#6a6a6a" /></Svg>
      </div>
      <div className="ml-[9px]">
        <Svg s={21} w={1.800}><path d="M9 6H18Q20 6 20 8V16Q20 18 18 18H4Q2 18 2 16V14" /><path d="M8 9H17.500V15.500H5V14Z" fill="currentColor" /><path d="M22.500 10V14" /><path d="M5 2L1.500 8.500H4L3 13L7.500 6.500H5Z" fill="currentColor" strokeWidth="0.800" /></Svg>
      </div>
      <div className="mr-[25px] mb-[3px] ml-auto text-right text-[14.500px] leading-[20px] tracking-[-0.050px]"><div className="tracking-[-0.250px]">10:12 PM</div><div>4/10/2025</div></div>
    </div>
  );
}

export default function App() {
  return (
    <div className="flex h-[1080px] w-[1920px] flex-col overflow-hidden bg-[#3b3b3b] font-['Open_Sans',sans-serif] text-white">
      <TabStrip />
      <AddressRow />
      <PdfToolbar />
      <Viewer />
      <div className="h-[5px] shrink-0 bg-[#3d3d3b]" />
      <Taskbar />
    </div>
  );
}
